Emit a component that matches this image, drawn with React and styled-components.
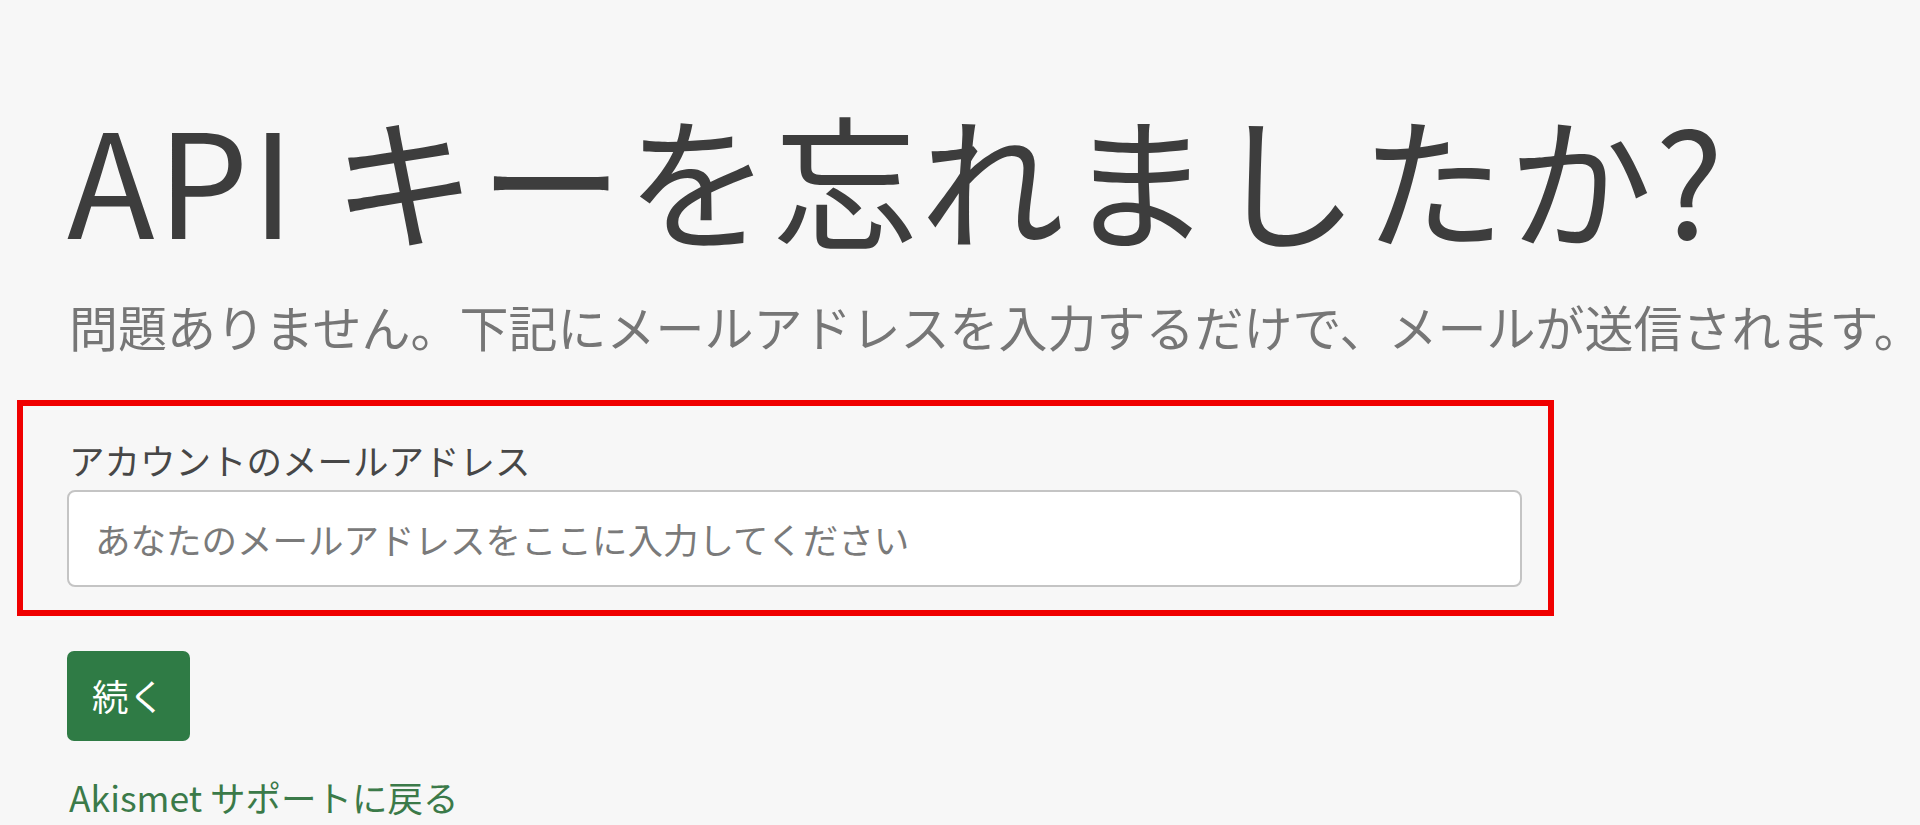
import React from "react";
import styled, { createGlobalStyle } from "styled-components";

const Global = createGlobalStyle`
  html, body {
    margin: 0;
    padding: 0;
    background: #f7f7f7;
  }
  body {
    font-family: "Noto Sans CJK JP", "Noto Sans", sans-serif;
    overflow: hidden;
  }
  * { box-sizing: border-box; }
`;

const Page = styled.main`
  width: 1920px;
  height: 825px;
  padding: 90px 0 0 67px;
  display: flex;
  flex-direction: column;
  align-items: flex-start;
`;

const Title = styled.h1`
  margin: 0;
  font-size: 144px;
  line-height: 1.2;
  font-weight: 400;
  color: #3d3d3d;
  white-space: nowrap;
  letter-spacing: 3px;
`;

const Lead = styled.p`
  margin: 31px 0 0 2px;
  font-size: 49px;
  line-height: 1.3;
  color: #767676;
  white-space: nowrap;
`;

const Highlight = styled.div`
  margin: 43px 0 0 -50px;
  width: 1537px;
  border: 6px solid #f00000;
  padding: 27px 26px 23px 44px;
  display: flex;
  flex-direction: column;
  gap: 4px;
`;

const Label = styled.label`
  font-size: 35.5px;
  line-height: 53px;
  color: #474747;
  padding-left: 2px;
`;

const Input = styled.input`
  width: 100%;
  height: 97px;
  border: 2px solid #c4c4c4;
  border-radius: 8px;
  background: #ffffff;
  padding: 0 26px;
  font-family: inherit;
  font-size: 35.5px;
  color: #333;
  outline: none;
  &::placeholder {
    color: #7a7a7a;
  }
`;

const Button = styled.button`
  margin-top: 35px;
  height: 90px;
  padding: 0 25px;
  border: none;
  border-radius: 7px;
  background: #2f7b45;
  color: #ffffff;
  font-family: inherit;
  font-size: 36.5px;
  line-height: 1;
  cursor: pointer;
`;

const BackLink = styled.a`
  margin-top: 29px;
  font-size: 35.5px;
  line-height: 53px;
  color: #3b7a49;
  text-decoration: none;
  padding-left: 2px;
`;

export default function App() {
  return (
    <>
      <Global />
      <Page>
        <Title>API キーを忘れましたか?</Title>
        <Lead>問題ありません。下記にメールアドレスを入力するだけで、メールが送信されます。</Lead>
        <Highlight>
          <Label htmlFor="email">アカウントのメールアドレス</Label>
          <Input id="email" type="email" placeholder="あなたのメールアドレスをここに入力してください" />
        </Highlight>
        <Button type="button">続く</Button>
        <BackLink href="#">Akismet サポートに戻る</BackLink>
      </Page>
    </>
  );
}
